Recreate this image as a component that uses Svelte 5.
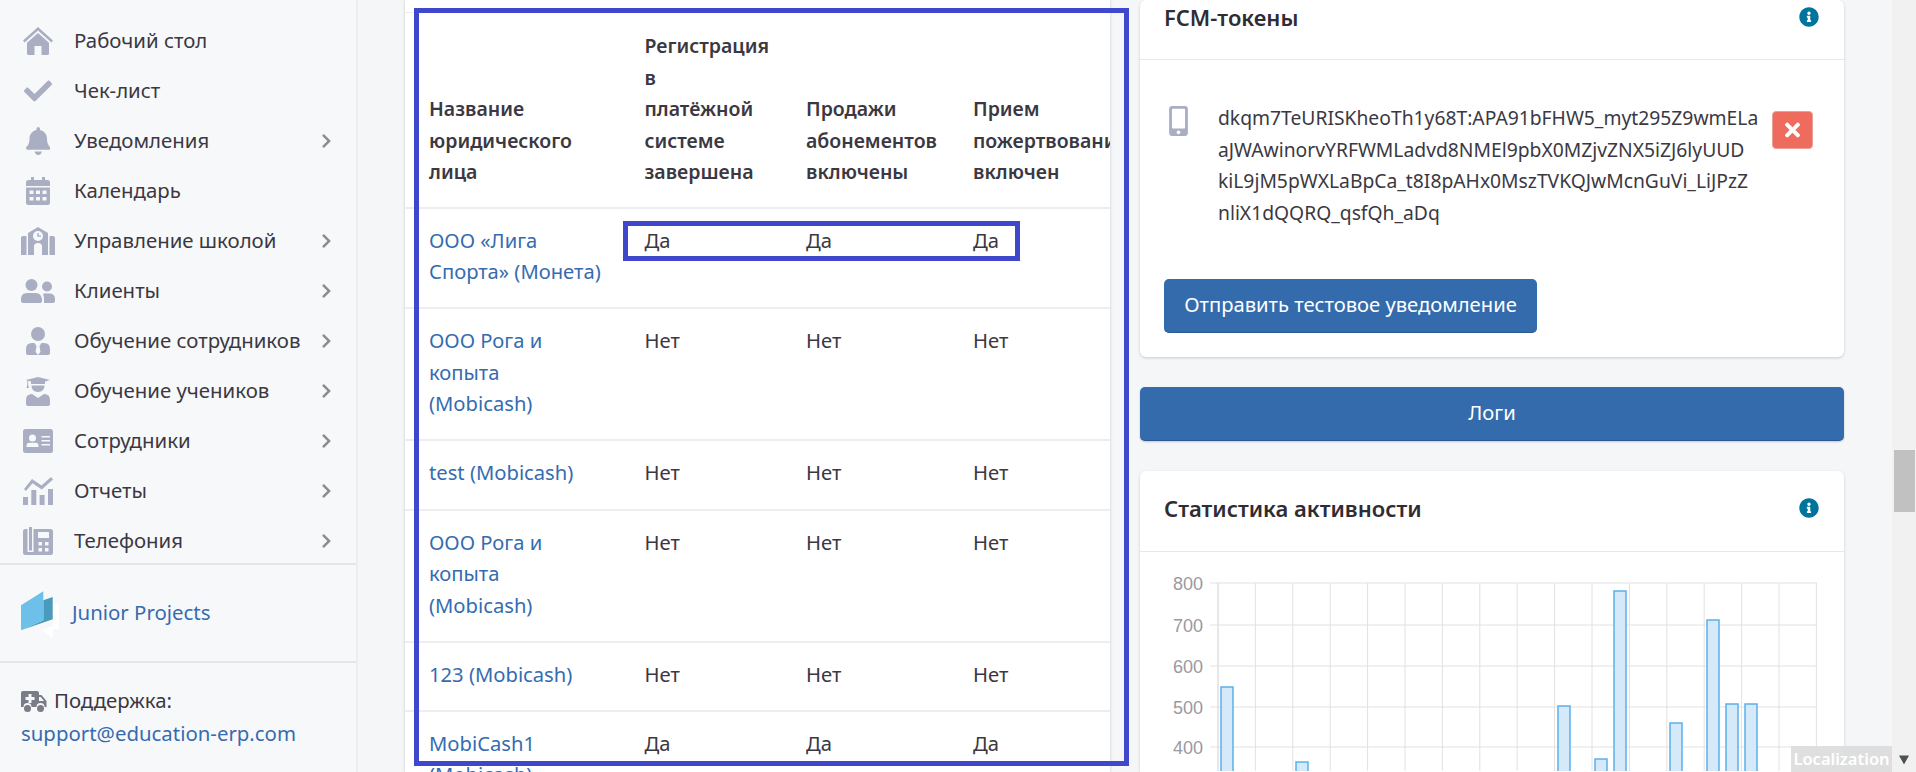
<script>
  const menu = [
    { label: 'Рабочий стол', icon: 'home' },
    { label: 'Чек-лист', icon: 'check' },
    { label: 'Уведомления', icon: 'bell', more: true },
    { label: 'Календарь', icon: 'calendar' },
    { label: 'Управление школой', icon: 'school', more: true },
    { label: 'Клиенты', icon: 'users', more: true },
    { label: 'Обучение сотрудников', icon: 'tie', more: true },
    { label: 'Обучение учеников', icon: 'grad', more: true },
    { label: 'Сотрудники', icon: 'card', more: true },
    { label: 'Отчеты', icon: 'chart', more: true },
    { label: 'Телефония', icon: 'phone', more: true }
  ]

  const heads = [
    'Название\nюридического\nлица',
    'Регистрация\nв\nплатёжной\nсистеме\nзавершена',
    'Продажи\nабонементов\nвключены',
    'Прием\nпожертвования\nвключен'
  ]

  const rows = [
    { name: 'ООО «Лига\nСпорта» (Монета)', v: 'Да' },
    { name: 'ООО Рога и\nкопыта\n(Mobicash)', v: 'Нет' },
    { name: 'test (Mobicash)', v: 'Нет' },
    { name: 'ООО Рога и\nкопыта\n(Mobicash)', v: 'Нет' },
    { name: '123 (Mobicash)', v: 'Нет' },
    { name: 'MobiCash1\n(Mobicash)', v: 'Да' }
  ]

  const token = [
    'dkqm7TeURISKheoTh1y68T:APA91bFHW5_myt295Z9wmELa',
    'aJWAwinorvYRFWMLadvd8NMEl9pbX0MZjvZNX5iZJ6lyUUD',
    'kiL9jM5pWXLaBpCa_t8I8pAHx0MszTVKQJwMcnGuVi_LiJPzZ',
    'nliX1dQQRQ_qsfQh_aDq'
  ]

  const ticks = [[800, 584], [700, 626], [600, 667], [500, 708], [400, 748]]
  const vlines = Array.from({ length: 17 }, (_, i) => 1218 + i * 37.4)
  const bars = [
    [1221, 688], [1296, 763], [1558, 707], [1595, 760], [1614, 592],
    [1670, 724], [1707, 621], [1726, 705], [1745, 705]
  ]
</script>

<div class="page">
  <aside class="sidebar">
    <nav class="nav">
      {#each menu as item}
        <a class="item">
          <span class="ico">
            {#if item.icon === 'home'}
              <svg width="30" height="28" viewBox="0 0 30 28"><path d="M15 0 L30 13.5 L28.4 15.6 L15 3.6 L1.6 15.6 L0 13.5 Z M15 6 L26 15.8 V26.5 Q26 28 24.5 28 H18.5 V19 H11.5 V28 H5.5 Q4 28 4 26.5 V15.8 Z"/></svg>
            {:else if item.icon === 'check'}
              <svg width="28" height="28" viewBox="0 0 512 512"><path d="M173.898 439.404l-166.4-166.4c-9.997-9.997-9.997-26.206 0-36.204l36.203-36.204c9.997-9.998 26.207-9.998 36.204 0L192 312.69 432.095 72.596c9.997-9.997 26.207-9.997 36.204 0l36.203 36.204c9.997 9.997 9.997 26.206 0 36.204l-294.4 294.401c-9.998 9.997-26.207 9.997-36.204-.001z"/></svg>
            {:else if item.icon === 'bell'}
              <svg width="24.5" height="28" viewBox="0 0 448 512"><path d="M224 512c35.32 0 63.97-28.65 63.97-64H160.03c0 35.35 28.65 64 63.97 64zm215.39-149.71c-19.32-20.76-55.47-51.99-55.47-154.29 0-77.7-54.48-139.9-127.94-155.16V32c0-17.67-14.32-32-31.98-32s-31.98 14.33-31.98 32v20.84C118.56 68.1 64.08 130.3 64.08 208c0 102.3-36.15 133.53-55.47 154.29-6 6.45-8.66 14.16-8.61 21.71.11 16.4 12.98 32 32.1 32h383.8c19.12 0 32-15.6 32.1-32 .05-7.55-2.61-15.27-8.61-21.71z"/></svg>
            {:else if item.icon === 'calendar'}
              <svg width="24" height="28" viewBox="0 0 24 28"><path fill-rule="evenodd" d="M5 0 H8 V3 H16 V0 H19 V3 H21.5 Q24 3 24 5.5 V9 H0 V5.5 Q0 3 2.500 3 H5 Z M0 10.500 H24 V25.500 Q24 28 21.500 28 H2.500 Q0 28 0 25.500 Z M3.500 13.500 V17 H7.500 V13.500 Z M10 13.500 V17 H14 V13.500 Z M16.500 13.500 V17 H20.500 V13.500 Z M3.500 20 V23.500 H7.500 V20 Z M10 20 V23.500 H14 V20 Z M16.500 20 V23.500 H20.500 V20 Z"/></svg>
            {:else if item.icon === 'school'}
              <svg width="34" height="28" viewBox="0 0 34 28"><path fill-rule="evenodd" d="M17 0 L27 6 V28 H21 V19.500 Q21 16 17 16 Q13 16 13 19.500 V28 H7 V6 Z M17 4 A5 5 0 1 0 17 14 A5 5 0 1 0 17 4 Z"/><path d="M0 11 Q0 9 2 9 H5.500 V28 H0 Z M34 11 Q34 9 32 9 H28.500 V28 H34 Z"/><path d="M16.300 6 H17.700 V8.500 H20 V9.800 H16.300 Z"/></svg>
            {:else if item.icon === 'users'}
              <svg width="34" height="24" viewBox="0 0 34 24"><circle cx="10.500" cy="6" r="6"/><circle cx="26" cy="7.500" r="5"/><path d="M0 20 Q0 14 6 14 H15 Q20 14 21 20 V22 Q21 24 19 24 H2 Q0 24 0 22 Z"/><path d="M22 15 Q24 14 26 14.500 H29 Q34 15 34 20 V22 Q34 24 32 24 H23 V20 Q23 17 22 15 Z"/></svg>
            {:else if item.icon === 'tie'}
              <svg width="24" height="28" viewBox="0 0 24 28"><circle cx="12" cy="7" r="7"/><path d="M0 22 Q0 16 6 16 H8.500 L10.500 19 L9.500 25 L12 28 L14.500 25 L13.500 19 L15.500 16 H18 Q24 16 24 22 V26 Q24 28 22 28 H2 Q0 28 0 26 Z"/></svg>
            {:else if item.icon === 'grad'}
              <svg width="24" height="29" viewBox="0 0 24 29"><path d="M12 0 L24 3 L19 4.500 V7 H5 V4.500 L2.200 3.700 V8 L3 11 H0.500 L1.300 8 V3.400 L0 3 Z"/><path d="M5.500 8.500 H18.500 Q18.500 15 12 15 Q5.500 15 5.500 8.500 Z"/><path d="M0 23 Q0 17 6 17 L12 21 L18 17 Q24 17 24 23 V27 Q24 29 22 29 H2 Q0 29 0 27 Z"/></svg>
            {:else if item.icon === 'card'}
              <svg width="30" height="24" viewBox="0 0 30 24"><path fill-rule="evenodd" d="M2.500 0 H27.500 Q30 0 30 2.500 V21.500 Q30 24 27.500 24 H2.500 Q0 24 0 21.500 V2.500 Q0 0 2.500 0 Z M9.500 5.500 A3.500 3.500 0 1 0 9.500 12.500 A3.500 3.500 0 1 0 9.500 5.500 Z M3.500 18 H15.500 V16.800 Q15.500 13.800 12.500 13.800 H6.500 Q3.500 13.800 3.500 16.800 Z M18.500 7 V8.500 H27 V7 Z M18.500 11 V12.500 H27 V11 Z M18.500 15 V16.500 H27 V15 Z"/></svg>
            {:else if item.icon === 'chart'}
              <svg width="30" height="28" viewBox="0 0 30 28"><rect x="0" y="20" width="5" height="8"/><rect x="8.300" y="13" width="5" height="15"/><rect x="16.600" y="18" width="5" height="10"/><rect x="25" y="12" width="5" height="16"/><path d="M1 12 L9 2 L18.500 8.500 L28 0 L30 2.500 L18.800 12.500 L9.500 6.200 L3 14 Z"/></svg>
            {:else if item.icon === 'phone'}
              <svg width="30" height="28" viewBox="0 0 30 28"><path fill-rule="evenodd" d="M2.500 2 H4.500 V25 H10.500 V2 H27.500 Q30 2 30 4.500 V25.500 Q30 28 27.500 28 H2.500 Q0 28 0 25.500 V4.500 Q0 2 2.500 2 Z M15 5 V11 H26 V5 Z M15.500 15 V18.500 H19 V15 Z M22 15 V18.500 H25.500 V15 Z M15.500 21 V24.500 H19 V21 Z M22 21 V24.500 H25.500 V21 Z"/><path d="M6 0 H9 V23.500 H6 Z"/></svg>
            {/if}
          </span>
          <span class="label">{item.label}</span>
          {#if item.more}
            <svg class="chev" width="11" height="16" viewBox="0 0 320 512"><path d="M285.476 272.971L91.132 467.314c-9.373 9.373-24.569 9.373-33.941 0l-22.667-22.667c-9.357-9.357-9.375-24.522-.04-33.901L188.505 256 34.484 101.255c-9.335-9.379-9.317-24.544.04-33.901l22.667-22.667c9.373-9.373 24.569-9.373 33.941 0L285.475 239.03c9.373 9.372 9.373 24.568.001 33.941z"/></svg>
          {/if}
        </a>
      {/each}
    </nav>

    <div class="project">
      <svg width="38" height="47" viewBox="21 589 38 47">
        <path fill="#fff" d="M52.700 601.700H59V627.300H52.700V636L41.700 628.300L52.700 624Z"/>
        <path fill="#4a9abb" d="M43.300 598.300L52.700 595V617.300L21 628.300L43.300 618.300Z"/>
        <path fill="#6cc0ea" d="M21 603.300L43.300 589.300V618.300L21 628.300Z"/>
      </svg>
      <a class="link">Junior Projects</a>
    </div>

    <div class="support">
      <div class="support-title">
        <svg width="26" height="22" viewBox="0 0 26 22"><path fill-rule="evenodd" d="M2 0 H16 Q18 0 18 2 V4 H20.500 L25.500 10 V16 H23.500 A4 4 0 0 0 15.500 16 H10.500 A4 4 0 0 0 2.500 16 H0 V2 Q0 0 2 0 Z M7.500 3 V6 H4.500 V9 H7.500 V12 H10.500 V9 H13.500 V6 H10.500 V3 Z M18 6 V10 H23 L19.700 6 Z"/><circle cx="6.500" cy="17.500" r="3.500"/><circle cx="19.500" cy="17.500" r="3.500"/></svg>
        <span>Поддержка:</span>
      </div>
      <a class="link">support@education-erp.com</a>
    </div>
  </aside>

  <main class="main">
    <section class="table-card">
      <table>
        <colgroup>
          <col class="c1" /><col class="c2" /><col class="c3" /><col class="c4" />
        </colgroup>
        <thead>
          <tr>
            {#each heads as head}
              <th>{head}</th>
            {/each}
          </tr>
        </thead>
        <tbody>
          {#each rows as row}
            <tr>
              <td class="name"><a class="link">{row.name}</a></td>
              <td>{row.v}</td>
              <td>{row.v}</td>
              <td>{row.v}</td>
            </tr>
          {/each}
        </tbody>
      </table>
    </section>

    <div class="right">
      <section class="card">
        <header class="card-head top">
          <h3>FCM-токены</h3>
          <svg class="info" width="20" height="20" viewBox="0 0 512 512"><path d="M256 8C119.043 8 8 119.083 8 256c0 136.997 111.043 248 248 248s248-111.003 248-248C504 119.083 392.957 8 256 8zm0 110c23.196 0 42 18.804 42 42s-18.804 42-42 42-42-18.804-42-42 18.804-42 42-42zm56 254c0 6.627-5.373 12-12 12h-88c-6.627 0-12-5.373-12-12v-24c0-6.627 5.373-12 12-12h12v-64h-12c-6.627 0-12-5.373-12-12v-24c0-6.627 5.373-12 12-12h64c6.627 0 12 5.373 12 12v100h12c6.627 0 12 5.373 12 12v24z"/></svg>
        </header>
        <div class="card-body">
          <div class="token-row">
            <svg class="mobile" width="19" height="30" viewBox="0 0 320 512"><path d="M272 0H48C21.500 0 0 21.500 0 48v416c0 26.500 21.500 48 48 48h224c26.500 0 48-21.500 48-48V48c0-26.500-21.500-48-48-48zM160 480c-17.700 0-32-14.300-32-32s14.300-32 32-32 32 14.300 32 32-14.300 32-32 32zm112-108c0 6.600-5.400 12-12 12H60c-6.600 0-12-5.400-12-12V60c0-6.600 5.400-12 12-12h200c6.600 0 12 5.400 12 12v312z"/></svg>
            <div class="token">
              {#each token as line}
                <div>{line}</div>
              {/each}
            </div>
            <button class="del" aria-label="Удалить">
              <svg width="15" height="22" viewBox="0 0 352 512"><path d="M242.720 256l100.070-100.070c12.280-12.280 12.280-32.190 0-44.480l-22.240-22.240c-12.280-12.280-32.190-12.280-44.480 0L176 189.280 75.930 89.210c-12.280-12.280-32.190-12.280-44.480 0L9.210 111.450c-12.280 12.280-12.280 32.190 0 44.480L109.280 256 9.210 356.070c-12.280 12.280-12.280 32.190 0 44.480l22.240 22.240c12.280 12.280 32.200 12.280 44.480 0L176 322.720l100.070 100.070c12.280 12.280 32.200 12.280 44.480 0l22.240-22.240c12.280-12.280 12.280-32.190 0-44.480L242.720 256z"/></svg>
            </button>
          </div>
          <button class="btn send">Отправить тестовое уведомление</button>
        </div>
      </section>

      <button class="btn logs">Логи</button>

      <section class="card stats">
        <header class="card-head">
          <h3>Статистика активности</h3>
          <svg class="info" width="20" height="20" viewBox="0 0 512 512"><path d="M256 8C119.043 8 8 119.083 8 256c0 136.997 111.043 248 248 248s248-111.003 248-248C504 119.083 392.957 8 256 8zm0 110c23.196 0 42 18.804 42 42s-18.804 42-42 42-42-18.804-42-42 18.804-42 42-42zm56 254c0 6.627-5.373 12-12 12h-88c-6.627 0-12-5.373-12-12v-24c0-6.627 5.373-12 12-12h12v-64h-12c-6.627 0-12-5.373-12-12v-24c0-6.627 5.373-12 12-12h64c6.627 0 12 5.373 12 12v100h12c6.627 0 12 5.373 12 12v24z"/></svg>
        </header>
        <svg class="chart" width="704" height="219" viewBox="1140 553 704 219">
          {#each vlines as x, i}
            <line x1={x} x2={x} y1="584" y2="772" stroke={i === 0 ? '#cfcfcf' : '#e2e2e2'} stroke-width="1" />
          {/each}
          {#each ticks as [label, y]}
            <line x1="1210" x2="1817" y1={y} y2={y} stroke="#e2e2e2" stroke-width="1.200" />
            <text x="1203" y={y + 6.500} text-anchor="end" class="tick">{label}</text>
          {/each}
          {#each bars as [x, y]}
            <rect x={x} y={y} width="12" height={780 - y} fill="#d5e9f8" stroke="#5ab0ea" stroke-width="1.500" />
          {/each}
        </svg>
      </section>
    </div>
  </main>

  <div class="scrollbar">
    <div class="thumb"></div>
    <svg class="arrow" width="12" height="10" viewBox="0 0 12 10"><path d="M1 0.500 H11 L6 9.500 Z"/></svg>
  </div>

  <!-- пометки поверх скриншота -->
  <div class="mark big"></div>
  <div class="mark small"></div>
  <div class="loc">Localization</div>
</div>

<style>
  :global(body) {
    margin: 0;
    overflow: hidden;
  }

  .page {
    position: relative;
    display: flex;
    width: 1916px;
    height: 772px;
    overflow: hidden;
    background: #f5f6f8;
    color: #3b3842;
    font-family: "Noto Sans", "Open Sans", sans-serif;
    font-size: 20.2px;
  }

  .link {
    color: #356cb0;
  }

  /* sidebar */
  .sidebar {
    flex: none;
    width: 356px;
    background: #f7f8fa;
    border-right: 2px solid #eceef1;
    font-size: 20.4px;
  }

  .nav {
    display: flex;
    flex-direction: column;
    gap: 6px;
    padding-top: 19px;
    border-bottom: 2px solid #e4e6ea;
  }

  .item {
    display: flex;
    align-items: center;
    height: 44px;
    padding-right: 24px;
  }

  .ico {
    display: flex;
    justify-content: center;
    width: 34px;
    margin-left: 21px;
    margin-right: 19px;
    fill: #a9aec3;
  }

  .label {
    flex: 1;
    padding-bottom: 2px;
  }

  .chev {
    fill: #8c8c8c;
  }

  .project {
    display: flex;
    align-items: center;
    gap: 13px;
    height: 96px;
    padding-left: 21px;
    border-bottom: 2px solid #e4e6ea;
  }

  .project svg {
    margin-top: 2px;
  }

  .project .link {
    padding-bottom: 3px;
  }

  .support {
    padding: 25px 21px 0;
  }

  .support-title {
    display: flex;
    align-items: center;
    gap: 7px;
    height: 24px;
    margin-bottom: 7px;
    fill: #7a7d88;
  }

  .support-title svg {
    margin-top: 3px;
  }

  /* main */
  .main {
    flex: 1;
    display: flex;
    gap: 30px;
    padding-left: 47px;
    min-width: 0;
  }

  .table-card {
    flex: none;
    width: 705px;
    height: 772px;
    box-sizing: border-box;
    padding-top: 12px;
    overflow: hidden;
    background: #fff;
    box-shadow: 0 0 3px rgba(0, 0, 0, 0.18);
  }

  table {
    width: 705px;
    table-layout: fixed;
    border-collapse: collapse;
    line-height: 31.5px;
    border-top: 1px solid #eceef1;
  }

  .c1 { width: 215.5px; }
  .c2 { width: 161.5px; }
  .c3 { width: 167px; }
  .c4 { width: 161px; }

  th {
    padding: 17px 0 19px 24px;
    text-align: left;
    vertical-align: bottom;
    font-size: 19.5px;
    font-weight: 600;
    white-space: pre-line;
  }

  td {
    padding: 16px 0 19.7px 24px;
    vertical-align: top;
    border-top: 2px solid #eceef1;
  }

  .name {
    white-space: pre-line;
  }

  .right {
    flex: none;
    width: 704px;
    display: flex;
    flex-direction: column;
  }

  .card {
    background: #fff;
    border-radius: 6px;
    box-shadow: 0 1px 3px rgba(0, 0, 0, 0.18);
  }

  .card-head {
    display: flex;
    align-items: center;
    justify-content: space-between;
    height: 81px;
    padding: 0 24px;
    padding-bottom: 5px;
    box-sizing: border-box;
    border-bottom: 1px solid #e6e8eb;
  }

  .card-head.top {
    height: 60px;
    padding-bottom: 26px;
  }

  .card-head h3 {
    margin: 0;
    font-size: 22px;
    font-weight: 600;
    color: #2f2c33;
  }

  .info {
    fill: #00749c;
    margin-right: 1px;
  }

  .card-body {
    padding: 42px 24px 24px;
  }

  .token-row {
    display: flex;
    align-items: flex-start;
  }

  .mobile {
    flex: none;
    fill: #a9aec3;
    margin: 4px 0 0 5px;
  }

  .token {
    flex: 1;
    margin-left: 30px;
    font-size: 19.3px;
    line-height: 31.7px;
    white-space: nowrap;
  }

  .del {
    flex: none;
    display: flex;
    align-items: center;
    justify-content: center;
    width: 41px;
    height: 38px;
    margin: 9px 7px 0 0;
    padding: 0;
    background: #ee6b5e;
    border: 1px solid #e9a097;
    border-radius: 4px;
    fill: #fff;
  }

  .btn {
    display: block;
    padding: 0 0 3px;
    background: #346bad;
    color: #fff;
    border: 0;
    border-bottom: 1px solid #2a5a96;
    border-radius: 5px;
    font-family: inherit;
    font-size: 20.2px;
  }

  .send {
    width: 373px;
    height: 54px;
    margin-top: 50px;
  }

  .logs {
    flex: none;
    width: 704px;
    height: 54px;
    margin-top: 30px;
    box-shadow: 0 1px 2px rgba(0, 0, 0, 0.2);
  }

  .stats {
    flex: 1;
    margin-top: 30px;
    overflow: hidden;
    border-radius: 6px 6px 0 0;
  }

  .chart {
    display: block;
  }

  .tick {
    font-family: "Liberation Sans", Arial, sans-serif;
    font-size: 18px;
    fill: #9a9a9f;
  }

  /* scrollbar */
  .scrollbar {
    flex: none;
    display: flex;
    flex-direction: column;
    width: 24px;
    background: #f1f1f1;
  }

  .thumb {
    width: 21px;
    height: 62px;
    margin: 450px 0 0 2px;
    background: #c1c1c1;
  }

  .arrow {
    margin: auto 0 7px 6px;
    fill: #505050;
  }

  /* annotations */
  .mark {
    position: absolute;
    box-sizing: border-box;
    border: 5px solid #3f48cc;
  }

  .mark.big {
    left: 414px;
    top: 8px;
    width: 715px;
    height: 758px;
  }

  .mark.small {
    left: 623px;
    top: 221px;
    width: 397px;
    height: 40px;
  }

  .loc {
    position: absolute;
    left: 1791px;
    bottom: 0;
    width: 101px;
    height: 26px;
    background: rgba(220, 220, 220, 0.9);
    color: #fff;
    font-size: 16.5px;
    font-weight: 600;
    line-height: 26px;
    text-align: center;
  }
</style>
